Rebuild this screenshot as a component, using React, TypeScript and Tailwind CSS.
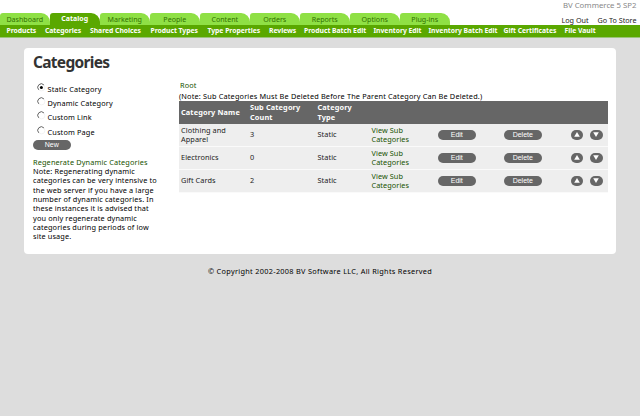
import React from "react";

const tabs = [
  "Dashboard",
  "Catalog",
  "Marketing",
  "People",
  "Content",
  "Orders",
  "Reports",
  "Options",
  "Plug-ins",
];

const links = [
  { label: "Products", cls: "w-[38.5px]" },
  { label: "Categories", cls: "w-[45px]" },
  { label: "Shared Choices", cls: "w-[60.5px]" },
  { label: "Product Types", cls: "w-[57px]" },
  { label: "Type Properties", cls: "w-[61.5px]" },
  { label: "Reviews", cls: "w-[35px]" },
  { label: "Product Batch Edit", cls: "w-[69.5px]" },
  { label: "Inventory Edit", cls: "w-[55px]" },
  { label: "Inventory Batch Edit", cls: "w-[75px]" },
  { label: "Gift Certificates", cls: "w-[61px]" },
  { label: "File Vault", cls: "w-[40px]" },
];

const kinds = ["Static Category", "Dynamic Category", "Custom Link", "Custom Page"];

const note = [
  "Note: Regenerating dynamic",
  "categories can be very intensive to",
  "the web server if you have a large",
  "number of dynamic categories. In",
  "these instances it is advised that",
  "you only regenerate dynamic",
  "categories during periods of low",
  "site usage.",
];

const rows = [
  { name: ["Clothing and", "Apparel"], count: 3 },
  { name: ["Electronics"], count: 0 },
  { name: ["Gift Cards"], count: 2 },
];

const grid =
  "grid grid-cols-[69px_67.5px_54px_66.5px_66px_66.5px_19.5px_17px] items-center";

function Pill({ children }: { children: React.ReactNode }) {
  return (
    <button className="block h-[10.5px] w-[37.5px] rounded-full bg-[#666] text-center font-['Liberation_Sans',sans-serif] text-[7px] leading-[10.5px] tracking-normal text-white">
      {children}
    </button>
  );
}

function Arrow({ down }: { down?: boolean }) {
  return (
    <button className="flex h-[10.5px] w-[12.5px] items-center justify-center rounded-full bg-[#666]">
      <svg width="6" height="5" viewBox="0 0 6 5" fill="#fff" className="-mt-[0.5px]">
        <path d={down ? "M.2 .3H5.8L3 5Z" : "M.2 4.7H5.8L3 0Z"} />
      </svg>
    </button>
  );
}

function Radio({ checked }: { checked?: boolean }) {
  return (
    <svg width="9" height="9" viewBox="0 0 9 9" fill="none" className="-mt-[4px]">
      <circle cx="4.5" cy="4.5" r="3.4" stroke="#eee" strokeWidth=".7" />
      <path d="M1.7 6.8A3.5 3.5 0 0 1 6.9 1.9" stroke="#666" strokeWidth="1" />
      {checked && <circle cx="4.4" cy="4.5" r="1.5" fill="#000" />}
    </svg>
  );
}

export default function App() {
  return (
    <div className="h-[416px] w-[640px] overflow-hidden bg-[#ddd] font-['Noto_Sans',sans-serif] text-[7.33px] leading-[9.33px] tracking-[0.14px] whitespace-nowrap text-black">
      <header className="flex h-[25px] justify-between bg-white">
        <nav className="flex items-end tracking-normal">
          {tabs.map((t, i) => (
            <a
              key={t}
              className={`mr-[0.5px] block h-[12.5px] w-[49.5px] rounded-tl-[3px] rounded-tr-[9px] text-center leading-[12px] ${
                i === 1
                  ? "bg-[#5aa800] text-[7px] font-bold text-white"
                  : "bg-[#8fe045] text-[7.1px] text-[#2f7000]"
              }`}
            >
              {t}
            </a>
          ))}
        </nav>
        <div className="flex flex-col items-end pr-[3.5px] tracking-normal">
          <div className="text-[7.8px] leading-[10px] text-[#888]">BV Commerce 5 SP2</div>
          <div className="mt-[5.5px] flex gap-[9px] text-[7.2px] text-[#222]">
            <a>Log Out</a>
            <a>Go To Store</a>
          </div>
        </div>
      </header>
      <nav className="flex h-[13px] border-b border-[#9cc47a] bg-[#5aa800] pl-[6.5px] text-[6.8px] leading-[12px] font-bold tracking-[-0.03px] text-white">
        {links.map((l) => (
          <a key={l.label} className={`shrink-0 ${l.cls}`}>
            {l.label}
          </a>
        ))}
      </nav>

      <main className="mx-6 mt-[10px] h-[205.5px] rounded-[4px] bg-white pl-[9px]">
        <h1 className="pt-[4px] text-[15.5px] leading-[20px] font-bold tracking-[-0.7px] text-[#333]">
          Categories
        </h1>
        <div className="flex">
          <aside className="w-[146px] shrink-0 pt-[10px]">
            {kinds.map((k, i) => (
              <label key={k} className="flex h-[14.4px] items-center gap-[1.5px] pl-[4px]">
                <Radio checked={i === 0} />
                <span>{k}</span>
              </label>
            ))}
            <Pill>New</Pill>
            <div className="mt-[7.5px] text-[#175200]">Regenerate Dynamic Categories</div>
            {note.map((n) => (
              <p key={n}>{n}</p>
            ))}
          </aside>
          <section className="w-[428.5px] pt-[9px]">
            <div className="pl-[1px] text-[#175200]">Root</div>
            <p className="mt-[1.5px] tracking-[0.17px]">
              (Note: Sub Categories Must Be Deleted Before The Parent Category Can Be Deleted.)
            </p>
            <div className={`${grid} h-[23px] bg-[#666] pl-[2px] font-bold text-white`}>
              <div>Category Name</div>
              <div>
                Sub Category
                <br />
                Count
              </div>
              <div>
                Category
                <br />
                Type
              </div>
            </div>
            {rows.map((r) => (
              <div
                key={r.count}
                className={`${grid} h-[23px] border-b border-[#fafafa] bg-[#eee] pl-[2px] tracking-[0.06px] text-[#222]`}
              >
                <div>
                  {r.name.map((n) => (
                    <p key={n}>{n}</p>
                  ))}
                </div>
                <div>{r.count}</div>
                <div>Static</div>
                <a className="text-[#175200]">
                  View Sub
                  <br />
                  Categories
                </a>
                <Pill>Edit</Pill>
                <Pill>Delete</Pill>
                <Arrow />
                <Arrow down />
              </div>
            ))}
          </section>
        </div>
      </main>
      <footer className="pt-[13px] text-center tracking-[0.3px]">
        © Copyright 2002-2008 BV Software LLC, All Rights Reserved
      </footer>
    </div>
  );
}
